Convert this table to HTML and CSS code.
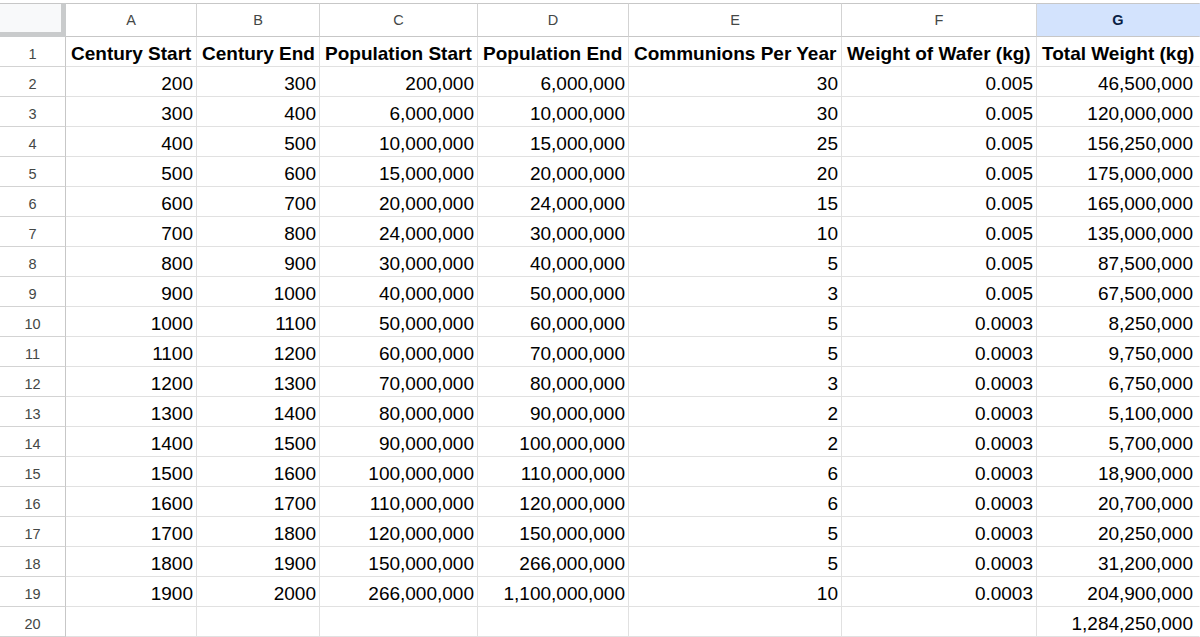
FILE: index.html
```html
<!DOCTYPE html>
<html>
<head>
<meta charset="utf-8">
<link rel="stylesheet" href="styles.css">
</head>
<body>
<div class="sheet">
  <div class="grid">
    <div class="corner"></div>
    <div class="colhead">A</div>
    <div class="colhead">B</div>
    <div class="colhead">C</div>
    <div class="colhead">D</div>
    <div class="colhead">E</div>
    <div class="colhead">F</div>
    <div class="colhead sel last">G</div>
  </div>
  <div class="grid" id="body"></div>
</div>
<script src="app.js"></script>
</body>
</html>
```
FILE: styles.css
```css
* { box-sizing: border-box; }
html, body { margin: 0; padding: 0; background: #ffffff; }
body { font-family: "Liberation Sans", Arial, sans-serif; overflow: hidden; }
.sheet { padding-top: 3px; width: 1200px; }
.grid {
  display: grid;
  grid-template-columns: 66px 131px 123px 158px 151px 213px 195px 163px;
}
.corner {
  height: 34px;
  background: #f8f9fa;
  border-top: 1px solid #c7c7c7;
  border-right: 5px solid #c9cbcc;
  border-bottom: 5px solid #c9cbcc;
}
.colhead {
  height: 34px;
  border-top: 1px solid #c7c7c7;
  border-right: 1px solid #d3d3d3;
  border-bottom: 1px solid #c7c7c7;
  display: flex;
  align-items: center;
  justify-content: center;
  font-size: 14.5px;
  color: #444746;
  background: #ffffff;
}
.colhead.sel {
  background: #d3e3fd;
  color: #0a1f44;
  font-weight: bold;
}
.rowhead {
  height: 30px;
  border-right: 1px solid #c7c7c7;
  border-bottom: 1px solid #d3d3d3;
  display: flex;
  align-items: flex-end;
  justify-content: center;
  padding-bottom: 4px;
  font-size: 14.5px;
  line-height: 16px;
  color: #444746;
}
.cell {
  height: 30px;
  border-right: 1px solid #e1e1e1;
  border-bottom: 1px solid #e1e1e1;
  display: flex;
  align-items: flex-end;
  justify-content: flex-end;
  padding: 0 3px 1px 5px;
  font-size: 19px;
  line-height: 22px;
  color: #000000;
  white-space: nowrap;
  overflow: hidden;
}
.cell.head {
  justify-content: flex-start;
  font-weight: bold;
}
.last { border-right-color: transparent; }
.cell.last { padding-right: 6px; }
```
FILE: app.js
```js
var headers = ["Century Start","Century End","Population Start","Population End","Communions Per Year","Weight of Wafer (kg)","Total Weight (kg)"];
var rows = [
["200","300","200,000","6,000,000","30","0.005","46,500,000"],
["300","400","6,000,000","10,000,000","30","0.005","120,000,000"],
["400","500","10,000,000","15,000,000","25","0.005","156,250,000"],
["500","600","15,000,000","20,000,000","20","0.005","175,000,000"],
["600","700","20,000,000","24,000,000","15","0.005","165,000,000"],
["700","800","24,000,000","30,000,000","10","0.005","135,000,000"],
["800","900","30,000,000","40,000,000","5","0.005","87,500,000"],
["900","1000","40,000,000","50,000,000","3","0.005","67,500,000"],
["1000","1100","50,000,000","60,000,000","5","0.0003","8,250,000"],
["1100","1200","60,000,000","70,000,000","5","0.0003","9,750,000"],
["1200","1300","70,000,000","80,000,000","3","0.0003","6,750,000"],
["1300","1400","80,000,000","90,000,000","2","0.0003","5,100,000"],
["1400","1500","90,000,000","100,000,000","2","0.0003","5,700,000"],
["1500","1600","100,000,000","110,000,000","6","0.0003","18,900,000"],
["1600","1700","110,000,000","120,000,000","6","0.0003","20,700,000"],
["1700","1800","120,000,000","150,000,000","5","0.0003","20,250,000"],
["1800","1900","150,000,000","266,000,000","5","0.0003","31,200,000"],
["1900","2000","266,000,000","1,100,000,000","10","0.0003","204,900,000"],
["","","","","","","1,284,250,000"]
];
var body = document.getElementById("body");
function add(cls, text) {
  var d = document.createElement("div");
  d.className = cls;
  d.textContent = text;
  body.appendChild(d);
}
add("rowhead", "1");
headers.forEach(function (h, i) { add("cell head" + (i === 6 ? " last" : ""), h); });
rows.forEach(function (r, ri) {
  add("rowhead", String(ri + 2));
  r.forEach(function (v, i) { add("cell" + (i === 6 ? " last" : ""), v); });
});
```
